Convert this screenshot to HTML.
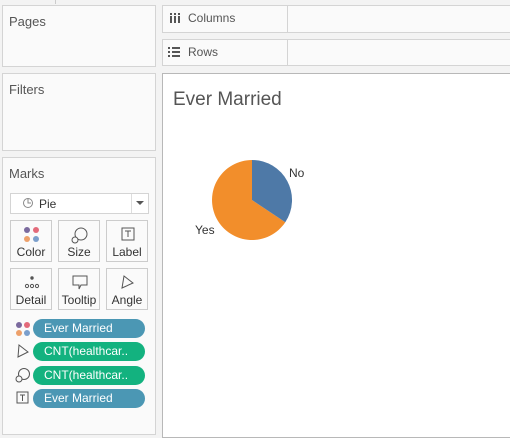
<!DOCTYPE html><html><head><style>
body{margin:0;width:510px;height:435px;background:#f3f3f3;font-family:"Liberation Sans",sans-serif;position:relative;overflow:hidden;color:#444}
.b{position:absolute;background:#fafafa;border:1px solid #d4d4d4;box-sizing:border-box}
.t{position:absolute;font-size:13px;color:#555}
.btn{position:absolute;width:42px;height:42px;background:#fafafa;border:1px solid #ccc;box-sizing:border-box;font-size:12px;text-align:center;color:#333}
.btn span{position:absolute;left:0;right:0;bottom:2px}
.btn svg{position:absolute;left:12px;top:5px}
.pill{position:absolute;left:33px;width:112px;height:19px;border-radius:10px;color:#fff;font-size:12px;line-height:19px;padding-left:11px;box-sizing:border-box}
</style></head><body>
<div style="position:absolute;left:55px;top:0;width:1px;height:4px;background:#ccc"></div>
<div class="b" style="left:2px;top:5px;width:154px;height:62px"></div><div class="t" style="left:9px;top:14px">Pages</div>
<div class="b" style="left:2px;top:73px;width:154px;height:78px"></div><div class="t" style="left:9px;top:82px">Filters</div>
<div class="b" style="left:2px;top:157px;width:154px;height:278px"></div><div class="t" style="left:9px;top:166px">Marks</div>
<div class="b" style="left:10px;top:193px;width:139px;height:21px;background:#fff"></div>
<div style="position:absolute;left:131px;top:194px;width:1px;height:19px;background:#ddd"></div>
<svg style="position:absolute;left:22px;top:197px" width="12" height="12"><circle cx="6" cy="6" r="4.5" fill="none" stroke="#888"/><path d="M6 2V6H9" fill="none" stroke="#888"/></svg>
<div style="position:absolute;left:39px;top:197px;font-size:12px;color:#333">Pie</div>
<svg style="position:absolute;left:136px;top:201px" width="8" height="5"><path d="M0 0H8L4 4Z" fill="#555"/></svg>
<div class="btn" style="left:10px;top:220px"><svg width="18" height="18"><circle cx="4" cy="4" r="3" fill="#7b6a9e"/><circle cx="13" cy="4" r="3" fill="#e36a7a"/><circle cx="4" cy="13" r="3" fill="#eda06a"/><circle cx="13" cy="13" r="3" fill="#7b9fcc"/></svg><span>Color</span></div>
<div class="btn" style="left:58px;top:220px"><svg width="18" height="18"><circle cx="10" cy="8" r="6" fill="none" stroke="#555"/><circle cx="4" cy="14" r="3" fill="#fafafa" stroke="#555"/></svg><span>Size</span></div>
<div class="btn" style="left:106px;top:220px"><svg width="18" height="18"><rect x="3" y="2" width="12" height="12" fill="none" stroke="#555"/><path d="M6 5H12M9 5V11" stroke="#555"/></svg><span>Label</span></div>
<div class="btn" style="left:10px;top:268px"><svg width="18" height="18"><circle cx="9" cy="4" r="1.7" fill="#555"/><circle cx="4" cy="12" r="1.6" fill="none" stroke="#555"/><circle cx="9" cy="12" r="1.6" fill="none" stroke="#555"/><circle cx="14" cy="12" r="1.6" fill="none" stroke="#555"/></svg><span>Detail</span></div>
<div class="btn" style="left:58px;top:268px"><svg width="18" height="18"><path d="M2 2H16V11H10L8 15V11H2Z" fill="none" stroke="#555"/></svg><span>Tooltip</span></div>
<div class="btn" style="left:106px;top:268px"><svg width="18" height="18"><path d="M5 2L14 9L3 14Z" fill="none" stroke="#555"/></svg><span>Angle</span></div>
<svg style="position:absolute;left:15px;top:321px" width="16" height="16"><circle cx="4" cy="4" r="3" fill="#7b6a9e"/><circle cx="12" cy="4" r="3" fill="#e36a7a"/><circle cx="4" cy="12" r="3" fill="#eda06a"/><circle cx="12" cy="12" r="3" fill="#7b9fcc"/></svg>
<svg style="position:absolute;left:16px;top:344px" width="14" height="14"><path d="M3 1L12 8L2 13Z" fill="none" stroke="#555"/></svg>
<svg style="position:absolute;left:15px;top:367px" width="16" height="16"><circle cx="9" cy="7" r="5.5" fill="none" stroke="#555"/><circle cx="4" cy="12" r="3" fill="#fafafa" stroke="#555"/></svg>
<svg style="position:absolute;left:16px;top:391px" width="14" height="14"><rect x="1" y="1" width="11" height="11" fill="none" stroke="#555"/><path d="M4 4H9M6.5 4V10" stroke="#555"/></svg>
<div class="pill" style="top:319px;background:#4b97b4">Ever Married</div>
<div class="pill" style="top:342px;background:#13b27f">CNT(healthcar..</div>
<div class="pill" style="top:366px;background:#13b27f">CNT(healthcar..</div>
<div class="pill" style="top:389px;background:#4b97b4">Ever Married</div>
<div class="b" style="left:162px;top:5px;width:350px;height:28px"></div>
<div style="position:absolute;left:287px;top:6px;width:1px;height:26px;background:#d4d4d4"></div>
<svg style="position:absolute;left:169px;top:12px" width="12" height="12"><rect x="1" y="1" width="2" height="2" fill="#555"/><rect x="5" y="1" width="2" height="2" fill="#555"/><rect x="9" y="1" width="2" height="2" fill="#555"/><rect x="1" y="4" width="2" height="7" fill="#555"/><rect x="5" y="4" width="2" height="7" fill="#555"/><rect x="9" y="4" width="2" height="7" fill="#555"/></svg>
<div class="t" style="left:188px;top:11px;font-size:12px">Columns</div>
<div class="b" style="left:162px;top:39px;width:350px;height:27px"></div>
<div style="position:absolute;left:287px;top:40px;width:1px;height:25px;background:#d4d4d4"></div>
<svg style="position:absolute;left:168px;top:46px" width="12" height="12"><path d="M0 2H2M4 2H12M0 6H2M4 6H12M0 10H2M4 10H12" stroke="#555" stroke-width="2"/></svg>
<div class="t" style="left:188px;top:45px;font-size:12px">Rows</div>
<div style="position:absolute;left:162px;top:73px;width:350px;height:365px;background:#fff;border:1px solid #b8b8b8;box-sizing:border-box"></div>
<div style="position:absolute;left:173px;top:89px;font-size:19px;color:#555">Ever Married</div>
<svg style="position:absolute;left:0;top:0" width="510" height="435"><path d="M252 200L252 160A40 40 0 1 0 285.3 222.2Z" fill="#f28e2b"/><path d="M252 200L252 160A40 40 0 0 1 285.3 222.2Z" fill="#4e79a7"/></svg>
<div style="position:absolute;left:289px;top:166px;font-size:12px;color:#333">No</div>
<div style="position:absolute;left:195px;top:223px;font-size:12px;color:#333">Yes</div>
</body></html>
